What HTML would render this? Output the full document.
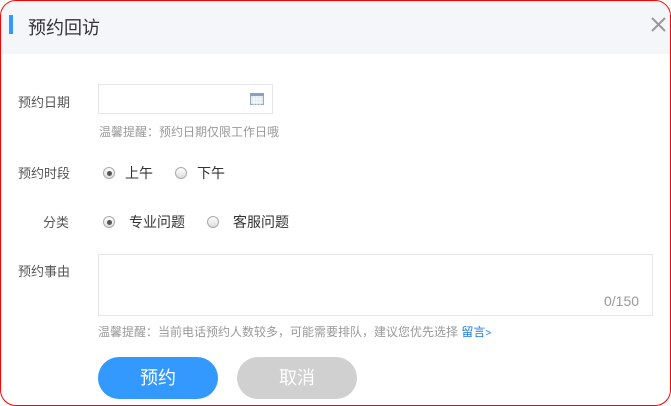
<!DOCTYPE html><html><head><style>
body{margin:0;width:671px;height:406px;overflow:hidden;background:#fff;font-family:"Liberation Sans","Noto Sans CJK SC",sans-serif;}
.box{position:absolute;left:0;top:0;width:669px;height:404px;border:1px solid #f00;border-radius:16px;overflow:hidden;}
.hd{position:absolute;left:0;top:0;width:100%;height:53px;background:#f5f6fa;}
.bar{position:absolute;left:8px;top:14px;width:4px;height:19px;background:#3399ff;}
.t{position:absolute;white-space:nowrap;}
.lab{font-size:13px;color:#555;}
.opt{font-size:14px;color:#333;}
.hint{font-size:12px;color:#999;}
.r{position:absolute;width:12px;height:12px;border-radius:50%;border:1px solid #aaa;background:linear-gradient(#fff,#ddd);box-sizing:border-box;}
.r.on::after{content:"";position:absolute;left:2.5px;top:2.5px;width:5px;height:5px;border-radius:50%;background:#555;}
.btn{position:absolute;top:356px;width:120px;height:42px;border-radius:21px;color:#fff;font-size:18px;text-align:center;line-height:42px;}
</style></head><body><div class="box">
<div class="hd"><div class="bar"></div><div class="t" style="left:27px;top:13px;font-size:18px;color:#333;">预约回访</div>
<svg style="position:absolute;left:650px;top:16px" width="15" height="15"><path d="M1 1L14 14M14 1L1 14" stroke="#999" stroke-width="2"/></svg></div>
<div class="t lab" style="left:17px;top:91px">预约日期</div>
<div style="position:absolute;left:97px;top:83px;width:175px;height:30px;border:1px solid #e5e5e5;box-sizing:border-box"></div>
<svg style="position:absolute;left:249px;top:92px" width="14" height="12"><rect x="0.5" y="0.5" width="13" height="11" fill="#dde6f0" stroke="#9ab"/><rect x="0" y="0" width="14" height="3" fill="#8aa0c0"/><path d="M1 6H13M1 9H13M4 3V12M7 3V12M10 3V12" stroke="#fff" stroke-width=".8"/></svg>
<div class="t hint" style="left:98px;top:122px">温馨提醒：预约日期仅限工作日哦</div>
<div class="t lab" style="left:17px;top:162px">预约时段</div>
<div class="r on" style="left:102px;top:166px"></div><div class="t opt" style="left:124px;top:162px">上午</div>
<div class="r" style="left:174px;top:166px"></div><div class="t opt" style="left:196px;top:162px">下午</div>
<div class="t lab" style="left:42px;top:211px">分类</div>
<div class="r on" style="left:102px;top:215px"></div><div class="t opt" style="left:128px;top:211px">专业问题</div>
<div class="r" style="left:206px;top:215px"></div><div class="t opt" style="left:232px;top:211px">客服问题</div>
<div class="t lab" style="left:17px;top:260px">预约事由</div>
<div style="position:absolute;left:97px;top:253px;width:555px;height:62px;border:1px solid #e5e5e5;box-sizing:border-box"></div>
<div class="t" style="left:603px;top:292px;font-size:14px;color:#999">0/150</div>
<div class="t hint" style="left:97px;top:322px">温馨提醒：当前电话预约人数较多，可能需要排队，建议您优先选择 <span style="color:#1a7ae0">留言</span><span style="color:#1a7ae0;font-size:10px">&gt;</span></div>
<div class="btn" style="left:97px;background:#3399ff">预约</div>
<div class="btn" style="left:236px;background:#d0d0d0">取消</div>
</div></body></html>
